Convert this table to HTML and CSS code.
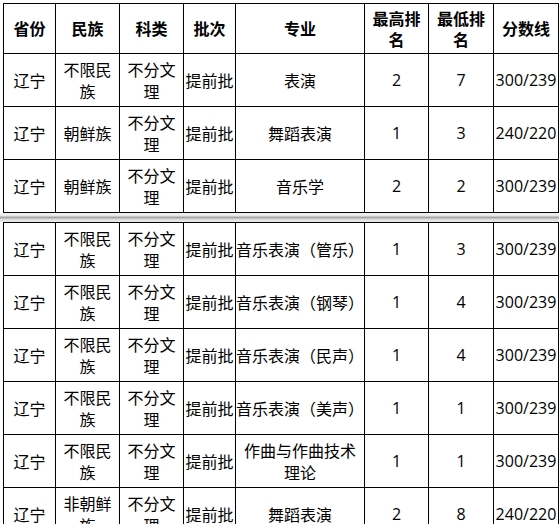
FILE: index.html
```html
<!DOCTYPE html>
<html lang="zh">
<head>
<meta charset="utf-8">
<link rel="stylesheet" href="styles.css">
</head>
<body>
<div class="page">
<table class="grid">
<colgroup><col class="c1"><col class="c2"><col class="c3"><col class="c4"><col class="c5"><col class="c6"><col class="c7"><col class="c8"></colgroup>
<tr class="head"><th>省份</th><th>民族</th><th>科类</th><th>批次</th><th>专业</th><th>最高排<br>名</th><th>最低排<br>名</th><th>分数线</th></tr>
<tr><td>辽宁</td><td>不限民<br>族</td><td>不分文<br>理</td><td>提前批</td><td>表演</td><td class="num">2</td><td class="num">7</td><td class="num">300/239</td></tr>
<tr><td>辽宁</td><td>朝鲜族</td><td>不分文<br>理</td><td>提前批</td><td>舞蹈表演</td><td class="num">1</td><td class="num">3</td><td class="num">240/220</td></tr>
<tr><td>辽宁</td><td>朝鲜族</td><td>不分文<br>理</td><td>提前批</td><td>音乐学</td><td class="num">2</td><td class="num">2</td><td class="num">300/239</td></tr>
</table>
<div class="sep"></div>
<table class="grid">
<colgroup><col class="c1"><col class="c2"><col class="c3"><col class="c4"><col class="c5"><col class="c6"><col class="c7"><col class="c8"></colgroup>
<tr><td>辽宁</td><td>不限民<br>族</td><td>不分文<br>理</td><td>提前批</td><td>音乐表演（管乐）</td><td class="num">1</td><td class="num">3</td><td class="num">300/239</td></tr>
<tr><td>辽宁</td><td>不限民<br>族</td><td>不分文<br>理</td><td>提前批</td><td>音乐表演（钢琴）</td><td class="num">1</td><td class="num">4</td><td class="num">300/239</td></tr>
<tr><td>辽宁</td><td>不限民<br>族</td><td>不分文<br>理</td><td>提前批</td><td>音乐表演（民声）</td><td class="num">1</td><td class="num">4</td><td class="num">300/239</td></tr>
<tr><td>辽宁</td><td>不限民<br>族</td><td>不分文<br>理</td><td>提前批</td><td>音乐表演（美声）</td><td class="num">1</td><td class="num">1</td><td class="num">300/239</td></tr>
<tr><td>辽宁</td><td>不限民<br>族</td><td>不分文<br>理</td><td>提前批</td><td>作曲与作曲技术<br>理论</td><td class="num">1</td><td class="num">1</td><td class="num">300/239</td></tr>
<tr><td>辽宁</td><td>非朝鲜<br>族</td><td>不分文<br>理</td><td>提前批</td><td>舞蹈表演</td><td class="num">2</td><td class="num">8</td><td class="num">240/220</td></tr>
</table>
</div>
</body>
</html>
```
FILE: styles.css
```css
html, body {
  margin: 0;
  padding: 0;
  background: #ffffff;
}
.page {
  padding: 3px 0 0 3px;
  overflow: hidden;
  height: 524px;
  box-sizing: border-box;
}
.grid {
  border-collapse: collapse;
  table-layout: fixed;
  width: 555px;
  font-family: "Noto Sans CJK SC", "Noto Sans", sans-serif;
  font-size: 16px;
  color: #000;
}
.c1 { width: 52px; }
.c2 { width: 64px; }
.c3 { width: 64px; }
.c4 { width: 52px; }
.c5 { width: 129px; }
.c6 { width: 64px; }
.c7 { width: 65px; }
.c8 { width: 65px; }
.grid th, .grid td {
  border: 1px solid #000;
  padding: 0;
  text-align: center;
  vertical-align: middle;
  white-space: nowrap;
  line-height: 22px;
  height: 52px;
  overflow: visible;
}
.grid tr.head th {
  height: 49px;
  font-weight: bold;
  line-height: 21px;
}
.grid td.num {
  font-family: "Open Sans", "Liberation Sans", sans-serif;
  font-size: 16px;
}
.sep {
  height: 9px;
  margin-left: -3px;
  width: 559px;
  background: linear-gradient(#f2f2f2 0, #e6e6e6 3px, #a8a8a8 4px, #a8a8a8 5px, #d9d9d9 6px, #ececec 9px);
}
```
